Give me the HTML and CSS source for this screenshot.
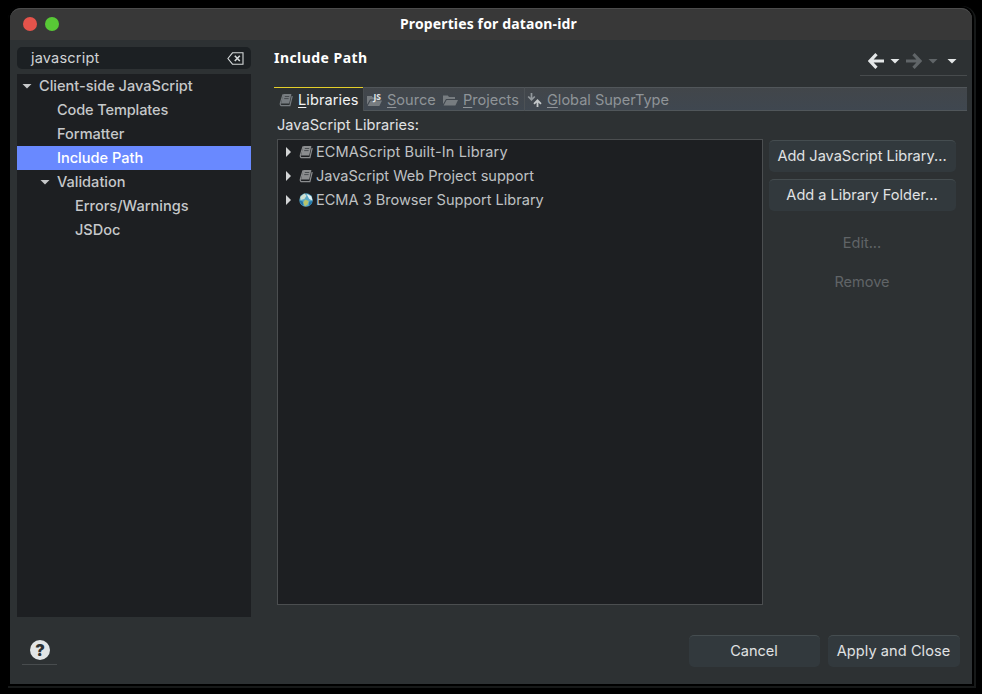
FILE: index.html
```html
<!DOCTYPE html>
<html lang="en">
<head>
<meta charset="utf-8">
<title>Properties for dataon-idr</title>
<link rel="stylesheet" href="styles.css">
</head>
<body>
<svg class="defs" aria-hidden="true">
  <symbol id="book" viewBox="0 0 14 14">
    <path d="M4.4 1H12.4L10.2 10.4H2z" fill="currentColor"/>
    <path d="M4 1.4L1.3 10.3Q1 12.7 3 12.7H10.9L13.2 3" fill="none" stroke="currentColor" stroke-width="1.2"/>
    <path d="M5.8 3.5h4.4M5.2 5.6h4.4" stroke="#3a3d41" stroke-width=".8"/>
  </symbol>
  <symbol id="folder" viewBox="0 0 17 14">
    <path d="M1 10V2.5h4.8L7 4h6v2H4L1.2 11z" fill="currentColor"/>
    <path d="M4.6 7H16l-2.6 5.5H1.6z" fill="currentColor"/>
  </symbol>
  <symbol id="arrow" viewBox="0 0 16 16">
    <path d="M8.5 1.2L2 8l6.5 6.8M2.5 8H16" fill="none" stroke="currentColor" stroke-width="3.2"/>
  </symbol>
</svg>
<div class="window">
  <header class="titlebar">
    <i class="light red"></i><i class="light green"></i>
    <span class="title">Properties for dataon-idr</span>
  </header>
  <div class="main">
    <aside class="sidebar">
      <div class="search"><span>javascript</span>
        <svg width="17" height="13" viewBox="0 0 17 13" fill="none" stroke="#d5d9da"><path d="M.9 6.5L5.5.8H16v11.4H5.5z" stroke-width="1.1"/><path d="M7.8 3.8l5 5.2M12.8 3.8l-5 5.2" stroke-width="1.6"/></svg>
      </div>
      <nav class="tree">
        <div class="row l0"><i class="down"></i><span>Client-side JavaScript</span></div>
        <div class="row l1"><span class="tight">Code Templates</span></div>
        <div class="row l1"><span>Formatter</span></div>
        <div class="row l1 selected"><span>Include Path</span></div>
        <div class="row l1 parent"><i class="down"></i><span>Validation</span></div>
        <div class="row l2"><span>Errors/Warnings</span></div>
        <div class="row l2"><span>JSDoc</span></div>
      </nav>
    </aside>
    <main class="page">
      <div class="head">
        <h1>Include Path</h1>
        <div class="tools">
          <svg width="16" height="16"><use href="#arrow"/></svg><i class="down"></i>
          <svg class="off flip" width="16" height="16"><use href="#arrow"/></svg><i class="down off"></i><i class="down last"></i>
        </div>
      </div>
      <div class="tabs">
        <div class="tab active"><svg width="14" height="14"><use href="#book"/></svg><span><u>L</u>ibraries</span></div>
        <div class="tab source"><svg width="18" height="16" viewBox="0 0 18 16"><use href="#folder" y="1.5" width="17" height="14"/><text x="7.4" y="7.6">JS</text></svg><span><u>S</u>ource</span></div>
        <div class="tab projects"><svg width="17" height="14"><use href="#folder"/></svg><span><u>P</u>rojects</span></div>
        <div class="tab global"><svg width="16" height="16" viewBox="0 0 16 16" fill="none"><path d="M4.5 1v6M1.2 4.5l3.3 3.3 3.3-3.3" stroke="#92989c" stroke-width="1.7"/><path d="M10.5 15V9M7 11.8l3.5-3.5 3.5 3.5" stroke="#c3c7c9" stroke-width="1.8"/></svg><span><u>G</u>lobal SuperType</span></div>
      </div>
      <div class="label">JavaScript Libraries:</div>
      <div class="content">
        <div class="list">
          <div class="item"><i class="right"></i><svg width="14" height="14"><use href="#book"/></svg><span class="wide">ECMAScript Built-In Library</span></div>
          <div class="item"><i class="right"></i><svg width="14" height="14"><use href="#book"/></svg><span>JavaScript Web Project support</span></div>
          <div class="item"><i class="right"></i><svg width="14" height="14" viewBox="0 0 13 13"><circle cx="6.5" cy="6.5" r="6.2" fill="#5aa9c8"/><path d="M1.2 3.5L5 .5l2 2-2 3-3.5 1z" fill="#cfdfd0"/><path d="M7 1l4.5 2 1 4-3-1.5z" fill="#e4f2f5"/><path d="M5.5 6l3.5 1.5-1 3-2.5 2L4 9z" fill="#b8c46b"/><path d="M.6 7l3 1 .5 3.5C2 11 .8 9 .6 7zM9.5 8l3-.5c-.5 2.5-2 4-3.5 4.5z" fill="#2475a8"/></svg><span>ECMA 3 Browser Support Library</span></div>
        </div>
        <div class="actions">
          <button>Add JavaScript Library...</button>
          <button>Add a Library Folder...</button>
          <button class="edit" disabled>Edit...</button>
          <button disabled>Remove</button>
        </div>
      </div>
    </main>
  </div>
  <footer class="footer">
    <div class="help"><span>?</span></div>
    <button class="cancel">Cancel</button>
    <button class="apply">Apply and Close</button>
  </footer>
</div>
</body>
</html>
```
FILE: styles.css
```css
* { box-sizing: border-box; }
body {
  margin: 0;
  height: 694px;
  padding: 8px 10px;
  background: #000;
  overflow: hidden;
  font-family: Inter, sans-serif;
  font-size: 14.55px;
  color: #e0e2e3;
}
.defs { display: none; }
.window {
  width: 962px;
  height: 676px;
  display: flex;
  flex-direction: column;
  background: #2d3133;
  border-radius: 11px 11px 0 0;
  box-shadow: 0 0 0 2px #000, 1px 1px 0 3px #171919;
}
.titlebar {
  position: relative;
  height: 32px;
  display: flex;
  align-items: center;
  padding: 0 0 1px 13px;
  gap: 8px;
  background: #383838;
  border-top: 1px solid #4c4c4c;
  border-radius: 11px 11px 0 0;
}
.light { width: 14px; height: 14px; border-radius: 50%; }
.red { background: #e5534b; }
.green { background: #58c936; }
.title {
  position: absolute;
  left: 390px;
  top: 5px;
  white-space: nowrap;
  color: #fff;
  font: bold 14px "Noto Sans", sans-serif;
  letter-spacing: .13px;
}
.main { display: flex; height: 577px; padding: 7px 5px 0 7px; }
.sidebar { width: 234px; display: flex; flex-direction: column; gap: 5px; }
.search {
  height: 22px;
  display: flex;
  align-items: center;
  justify-content: space-between;
  padding: 0 7px 0 14px;
  background: #1c2023;
  border-radius: 5px;
  color: #d0d3d5;
  letter-spacing: .18px;
}
.tree { flex: 1; background: #1d1f22; font-weight: 500; color: #c6c8ca; }
.row { height: 24px; display: flex; align-items: center; padding-left: 40px; }
.row.l0 { padding-left: 5px; gap: 7px; }
.row.parent { padding-left: 23px; gap: 7px; }
.row.l2 { padding-left: 58px; }
.tight { letter-spacing: -.12px; }
.selected { background: #6989ff; color: #fff; }
.down {
  width: 10px;
  height: 5px;
  background: currentColor;
  clip-path: polygon(0 0, 100% 0, 50% 100%);
}
.right {
  width: 5px;
  height: 10px;
  background: #d3d5d6;
  clip-path: polygon(0 0, 100% 50%, 0 100%);
}
.page { width: 693px; margin-left: 23px; }
.head { height: 40px; display: flex; justify-content: space-between; }
h1 {
  margin: 1px 0 0;
  font: bold 14px/20px "Noto Sans", sans-serif;
  letter-spacing: .45px;
  color: #fff;
}
.tools {
  width: 107px;
  height: 29px;
  display: flex;
  align-items: center;
  padding-left: 8px;
  border-bottom: 1px solid #474b4d;
  color: #e4e7e8;
}
.tools .down { margin: 0 6px; }
.tools .down.last { margin: 0 0 0 3px; }
.tools .off { color: #606568; }
.flip { transform: scaleX(-1); }
.tabs {
  height: 24px;
  display: flex;
  background: linear-gradient(#42464a, #3f4750);
  box-shadow: inset 0 1px #51565a, inset 0 -1px #50565a;
  color: #8f9498;
}
.tab { display: flex; align-items: center; height: 24px; padding-top: 1px; white-space: nowrap; }
.tab u { text-underline-offset: 2px; text-decoration-thickness: 1px; }
.tab svg { color: #777c80; flex: none; overflow: visible; }
.tab.active {
  width: 90px;
  padding-left: 5px;
  gap: 5px;
  background: linear-gradient(#e3cf2a 1px, #2d3133 1px);
  border-right: 1px solid #484d50;
  color: #f1f2f2;
  letter-spacing: .1px;
}
.tab.source { width: 78px; padding-left: 2px; gap: 3px; }
.tab.projects { width: 83px; gap: 4px; border-right: 1px solid #4c5155; }
.tab.global { padding-left: 2px; gap: 4px; }
.source text { font: bold 8.5px "Noto Sans", sans-serif; fill: #e3e6e8; }
.label { height: 28px; padding-left: 3px; line-height: 28px; letter-spacing: .05px; }
.content { display: flex; padding-left: 3px; gap: 6px; }
.list {
  width: 486px;
  height: 466px;
  border: 1px solid #4b4e50;
  background: #1d1f22;
  color: #bfc1c3;
}
.item { height: 24px; display: flex; align-items: center; padding-left: 8px; }
.item svg { margin: 0 3px 0 8px; color: #8b8d8f; }
.item .wide { letter-spacing: .12px; }
.actions { width: 187px; padding-top: 1px; display: flex; flex-direction: column; gap: 7px; }
button {
  height: 32px;
  padding: 0 1px 2px 0;
  border: 0;
  border-top: 1px solid #454d50;
  border-radius: 5px;
  background: #32393d;
  color: #e0e2e3;
  font: inherit;
  white-space: nowrap;
}
button:disabled { background: none; border-color: transparent; color: #606467; }
.edit { margin-top: 9px; }
.footer { height: 67px; display: flex; align-items: flex-start; padding: 18px 12px 0; }
.help {
  width: 35px;
  height: 30px;
  margin-right: auto;
  padding: 5px 0 0 8px;
  border-bottom: 1px solid #484c4e;
}
.help span {
  display: block;
  width: 20px;
  height: 20px;
  border-radius: 50%;
  background: #e2e5e6;
  color: #2d3133;
  font-weight: 900;
  font-size: 16px;
  line-height: 20px;
  text-align: center;
}
.cancel { width: 131px; margin-right: 8px; }
.apply { width: 132px; letter-spacing: .08px; }
```
